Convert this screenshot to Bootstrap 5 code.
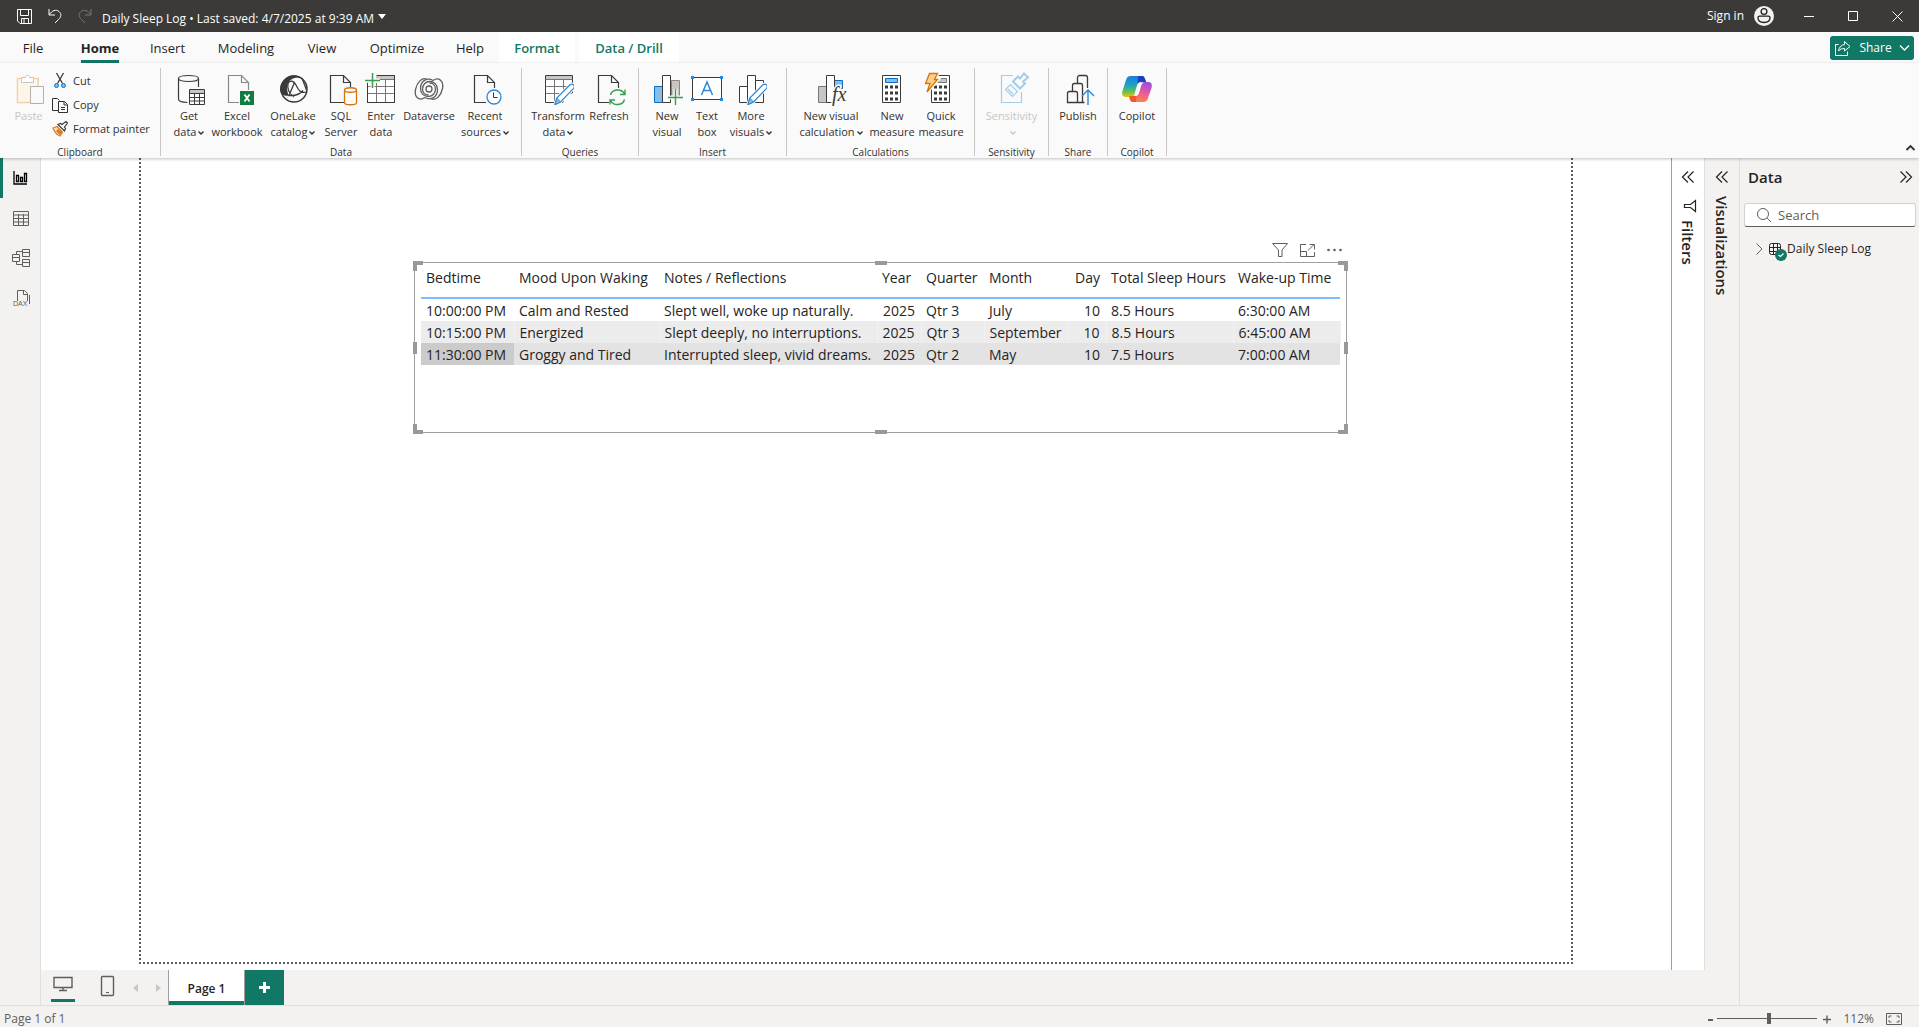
<!DOCTYPE html>
<html lang="en">
<head>
<meta charset="utf-8">
<meta name="viewport" content="width=device-width, initial-scale=1">
<title>Daily Sleep Log</title>
<link href="https://cdn.jsdelivr.net/npm/bootstrap@5.3.0/dist/css/bootstrap.min.css" rel="stylesheet">
<style>
:root{--green:#117865;--ink:#252423;--pane:#f3f2f1;--rule:#e1dfdd}
body{font-family:"Open Sans","Noto Sans",sans-serif;font-size:12px;line-height:16px;color:var(--ink);background:#fff}
button{background:none;border:0;padding:0;color:inherit;font:inherit}
a{color:inherit;text-decoration:none}
svg{display:block;flex:none;overflow:visible;fill:none;stroke:currentColor}
.titlebar{height:32px;background:#3b3a39;color:#fff}
.title-tools{width:102px;padding-left:17px}
.doc-title{font-size:12px;padding-top:5px}
.win-btn{width:44px;height:32px}
.signin{margin-right:13px;gap:10px}
.tabrow{height:31px;background:#fafafa;font-size:13px}
.rtab{height:31px;position:relative}
.rtab.active{font-weight:700}
.rtab.active::after{content:"";position:absolute;left:15px;right:15px;bottom:0;height:3px;background:var(--green)}
.rtab.ctx{background:#fff;color:var(--green);font-weight:600}
.w58{width:58px}.w62{width:62px}.w66{width:66px}.w67{width:67px}.w68{width:68px}.w76{width:76px}.w88{width:88px}.w90{width:90px}.w100{width:100px}
.share-btn{width:84px;height:24px;background:var(--green);color:#fff;border-radius:3px;font-size:12px;gap:8px;margin:4px 5px 0 0}
.ribbon{height:95px;background:#fafafa;box-shadow:0 1px 3px rgba(0,0,0,.25);z-index:2;padding-top:5px;color:#323130}
.rgroup{height:88px;border-right:1px solid #c8c6c4}
.rgroup .items{height:78px;padding:5px 5px 0}
.glabel{font-size:10px;line-height:12px;text-align:center;height:10px}
.rbtn{gap:3px;height:68px}
.rbtn .cap{white-space:nowrap;text-align:center;font-size:11px}
.rbtn:disabled{color:#c8c6c4}
.b34{width:34px}.b38{width:38px}.b42{width:42px}.b44{width:44px}.b46{width:46px}.b50{width:50px}.b54{width:54px}.b62{width:62px}.b64{width:64px}.b78{width:78px}
.clip{width:161px}
.clip .paste{width:47px}
.clip .items{align-items:flex-start}
.clip-list{height:72px;margin-top:-4px}
.clip-line{height:24px;gap:5px;font-size:11px}
.rgroup.g-insert .items{padding-left:9px;padding-right:12px}
.rgroup.g-query .items{padding-left:4px;padding-right:10px}
.rgroup.g-calc .items{padding-right:6px}
.g-one{width:59px}.g-sens{width:74px}
.caret{display:inline-block;width:6px;height:6px;margin-left:2px}
.leftnav{width:41px;background:var(--pane);border-right:1px solid var(--rule);color:#605e5c}
.leftnav button{height:40px;width:40px;padding-left:2px}
.leftnav button.active{border-left:3px solid var(--green);padding:0 2px 0 0;color:#000}
.stage{padding:0 98px 6px}
.report{border:2px dotted #605e5c;border-width:0 2px 2px;position:relative}
.visual{position:absolute;left:273px;top:104px;width:933px;height:171px;border:1px solid #a19f9d;padding:0 6px}
.vtools{position:absolute;right:4px;top:-20px;gap:12px;color:#605e5c}
.grip{position:absolute;border:0 solid #999}
.grip.tl,.grip.tr,.grip.bl,.grip.br{width:10px;height:10px}
.grip.tl{left:-2px;top:-2px;border-left-width:4px;border-top-width:4px}
.grip.tr{right:-2px;top:-2px;border-right-width:4px;border-top-width:4px}
.grip.bl{left:-2px;bottom:-2px;border-left-width:4px;border-bottom-width:4px}
.grip.br{right:-2px;bottom:-2px;border-right-width:4px;border-bottom-width:4px}
.gm{background:#999;width:12px;height:4px;left:50%;margin-left:-6px}
.gs{background:#999;width:4px;height:12px;top:50%;margin-top:-6px}
.g-top{top:-2px}.g-bottom{bottom:-2px}.g-left{left:-2px}.g-right{right:-2px}
.grid-data{width:919px;table-layout:fixed;border-collapse:collapse;font-size:14px;line-height:20px}
.grid-data th{font-weight:400;height:35px;padding:0 5px 4px;border-bottom:2px solid #7cbcff;white-space:nowrap;vertical-align:middle}
.grid-data td{height:22px;padding:2px 5px 0;white-space:nowrap;vertical-align:middle}
.grid-data .num{text-align:right;padding-right:6px}
.grid-data .alt td{background:#ececec;border-right:1px solid #f1f1f1}
.grid-data .sel td{background:#e3e3e3}
.grid-data .sel td:first-child{background:#cbcbcb}
.filters{width:34px;background:#fff;border-left:1px solid #a19f9d;border-right:1px solid var(--rule)}
.viz{width:35px;background:var(--pane);border-right:1px solid var(--rule)}
.vert{writing-mode:vertical-rl;font-size:15px;line-height:20px;font-weight:600}
.side-top{height:38px}
.datapane{width:179px;background:var(--pane);padding:0 3px 0 4px}
.datapane h2{font-size:15px;line-height:20px;font-weight:600;margin:0}
.searchbox{height:24px;background:#fff;border:1px solid #d1d1d1;border-bottom-color:#605e5c;border-radius:3px;gap:7px;padding-left:12px;margin-top:7px}
.searchbox input{border:0;outline:0;background:none;font-size:13px;width:120px;padding:0;color:#605e5c}
.searchbox input::placeholder{color:#605e5c;opacity:1}
.tree{margin-top:14px;padding-left:12px;gap:7px;height:16px;font-size:12px}
.pagebar{height:35px;background:var(--pane)}
.devices{width:127px;padding-left:10px;color:#605e5c}
.dev{height:32px}
.dev.on{border-bottom:3px solid var(--green);padding-bottom:2px}
.dev.arrow{height:35px}
.dev svg{margin:0 auto}
.devices .arrow + .arrow{margin:0 7px 0 18px}
.ptab{width:77px;height:35px;background:#fff;border:solid #a19f9d;border-width:0 1px;font-size:12px;font-weight:600;box-shadow:inset 0 -4px var(--green);padding-top:2px}
.addp{width:39px;height:35px;background:var(--green);color:#fff}
.status{height:22px;background:var(--pane);border-top:1px solid var(--rule);color:#605e5c;padding:4px 17px 0 4px}
.status .pct{margin:0 12px}
.zoomr{-webkit-appearance:none;appearance:none;width:100px;height:12px;background:linear-gradient(#605e5c,#605e5c) center/100% 1px no-repeat;margin:0 6px 0 4px}
.zoomr::-webkit-slider-thumb{-webkit-appearance:none;width:4px;height:11px;background:#605e5c}
</style>
</head>
<body class="d-flex flex-column vh-100 overflow-hidden">
<svg width="0" height="0" class="position-absolute" aria-hidden="true">
<defs>
<symbol id="page" viewBox="0 0 32 32"><path d="M12 29.500H5.500V2.500h13l7 7V15M18.500 2.500v7h7" fill="none" stroke="#3b3a39" stroke-width="1.200"/></symbol>
<symbol id="pencil" viewBox="0 0 32 32"><path d="M13 31.500l1.800-6.500L28 11.800c2.500-2 5.500.7 3.600 3.500L18.500 29z" fill="#fff" stroke="#fafafa" stroke-width="3"/><path d="M13 31.500l1.800-6.500L28 11.800c2.500-2 5.500.7 3.600 3.500L18.500 29z" fill="#fff" stroke="#2b88d8" stroke-width="1.200"/><path d="M13 31.500l1.800-6.500 3.700 4z" fill="#83beec" stroke="#2b88d8"/></symbol>
<symbol id="chev" viewBox="0 0 6 6"><path d="M.5 1.500L3 4l2.500-2.500" fill="none" stroke="currentColor" stroke-width="1.400"/></symbol>
<symbol id="calc" viewBox="0 0 20 28"><path d="M.5.5h18v27H.5z" fill="#fff" stroke="#3b3a39"/><path d="M3 10.500h3v3H3zm5 0h3v3H8zm5 0h3v3h-3zm-10 6h3v3H3zm5 0h3v3H8zm5 0h3v3h-3zm-10 6h3v3H3zm5 0h3v3H8zm5 0h3v3h-3z" fill="#3b3a39" stroke="none"/></symbol>
</defs>
</svg>

<header class="titlebar d-flex align-items-center">
  <div class="title-tools d-flex align-items-center">
    <button aria-label="Save"><svg width="15" height="15" viewBox="0 0 15 15"><path d="M.5.5h14v14H3L.5 12zM3.500.5v6h8v-6M4.500 14.500v-5h7v5M7 10v4"/></svg></button>
    <button aria-label="Undo" class="ms-3"><svg width="14" height="16" viewBox="0 0 14 16"><path d="M1 1v6h6M1.500 6.500C4 2.500 8 1 11 3.500s2 5.500-.5 8L7 15"/></svg></button>
    <button aria-label="Redo" class="ms-3" disabled><svg width="14" height="16" viewBox="0 0 14 16"><path d="M13 1v6H7M12.500 6.500C10 2.500 6 1 3 3.500S1 9 3.500 11.500L7 15" stroke="#797775"/></svg></button>
  </div>
  <button class="doc-title d-flex align-items-center">Daily Sleep Log • Last saved: 4/7/2025 at 9:39 AM<svg class="ms-1 mb-1" width="8" height="5" viewBox="0 0 8 5"><path d="M0 0h8L4 5z" fill="#fff" stroke="none"/></svg></button>
  <div class="ms-auto d-flex align-items-center">
    <button class="signin d-flex align-items-center">Sign in
      <svg width="20" height="20" viewBox="0 0 20 20"><circle cx="10" cy="10" r="10" fill="#f3f2f1" stroke="none"/><g stroke="#201f1e" stroke-width="1.300"><circle cx="10" cy="5.500" r="2.900"/><path d="M5.500 10.200h9c1.200 0 1.500.8 1.500 1.600 0 3-2.500 4.700-6 4.700s-6-1.700-6-4.700c0-.8.3-1.600 1.500-1.600z"/></g></svg></button>
    <button class="win-btn d-flex align-items-center justify-content-center" aria-label="Minimize"><svg width="10" height="10"><path d="M0 5.500h10"/></svg></button>
    <button class="win-btn d-flex align-items-center justify-content-center" aria-label="Maximize"><svg width="10" height="10"><path d="M.5.5h9v9h-9z"/></svg></button>
    <button class="win-btn d-flex align-items-center justify-content-center" aria-label="Close"><svg width="11" height="11"><path d="M.5.5l10 10m0-10l-10 10"/></svg></button>
  </div>
</header>

<nav class="tabrow d-flex">
  <button class="rtab w66">File</button><button class="rtab w68 active">Home</button><button class="rtab w67">Insert</button><button class="rtab w90">Modeling</button><button class="rtab w62">View</button><button class="rtab w88">Optimize</button><button class="rtab w58">Help</button><button class="rtab ctx w76">Format</button><button class="rtab ctx w100 ms-1">Data / Drill</button>
  <button class="share-btn ms-auto d-flex align-items-center justify-content-center"><svg width="16" height="15" viewBox="0 0 16 15"><path d="M3.500 3.500h-3v11h12v-4M9.500.5L15 5.500l-5.500 4.500V7.500C7 7.500 5 8 3.500 10 4 6.500 6 4 9.500 3.500z"/></svg><span>Share</span><svg width="9" height="6"><path d="M0 .5L4.500 5 9 .5" stroke-width="1.300"/></svg></button>
</nav>

<section class="ribbon d-flex position-relative">
  <div class="rgroup clip">
    <div class="items d-flex">
      <button class="rbtn paste d-flex flex-column align-items-center" disabled><svg width="32" height="32" viewBox="0 0 32 32"><path d="M8 5.500H4.500v24h13M20 5.500h5V13" stroke="#f5cfa5" stroke-width="1.500"/><path d="M6.500 7.500h16v6h-5v14h-11z" fill="#fdf5e6" stroke="none"/><path d="M8.500 9.500v-5h4c0-3 4-3 4 0h4v5z" fill="#fff" stroke="#c8c6c4"/><path d="M17.500 13.500h13v17h-13z" fill="#fafafa" stroke="#b3b0ad"/></svg><span class="cap">Paste</span></button>
      <div class="clip-list d-flex flex-column">
        <button class="clip-line d-flex align-items-center"><svg width="16" height="16" viewBox="0 0 16 16"><path d="M4.500 0l6 10.500M11.500 0l-6 10.500" stroke="#3b3a39" stroke-width="1.300"/><circle cx="4.500" cy="12.500" r="2" stroke="#0078d4" fill="#83beec"/><circle cx="11.500" cy="12.500" r="2" stroke="#0078d4" fill="#83beec"/></svg>Cut</button>
        <button class="clip-line d-flex align-items-center"><svg width="16" height="16" viewBox="0 0 16 16" stroke="#3b3a39"><path d="M6 13.500H.5V1.500h5l2 2M6.500 4.500h6l3 3v8h-9zM12 4.500V8h3.500M9 10.500h4M9 12.500h4"/></svg>Copy</button>
        <button class="clip-line d-flex align-items-center"><svg width="16" height="16" viewBox="0 0 16 16"><path d="M1 7l4-1.500L10.500 11 8 15C5.500 14 2.500 11 1 7z" fill="#fce1bd" stroke="#d67f2c" stroke-width="1.300"/><path d="M4 10l4 4 2-3-4-3z" fill="#e8730c" stroke="none"/><path d="M6 3.500l6.500 6.500 1-2.500-1-1.500L15.500 2 14 .5 10 3.500 8.500 2.500z" fill="#fff" stroke="#3b3a39" stroke-width="1.200"/></svg>Format painter</button>
      </div>
    </div>
    <div class="glabel">Clipboard</div>
  </div>

  <div class="rgroup">
    <div class="items d-flex">
      <button class="rbtn b46 d-flex flex-column align-items-center"><svg width="32" height="32" viewBox="0 0 32 32"><path d="M5.500 5.500c0-4 20-4 20 0s-20 4-20 0zV26c0 2 4 3.300 9 3.500M25.500 5.500V14" stroke="#3b3a39" stroke-width="1.200"/><path d="M16.500 16.500h15v15h-15z" fill="#fff" stroke="#3b3a39"/><path d="M17 17h14v3H17z" fill="#c8c6c4" stroke="none"/><path d="M16.500 20.500h15m-15 4h15m-15 3.500h15M21.500 20v11M26.500 20v11" stroke="#3b3a39"/></svg><span class="cap">Get<br>data<svg class="caret"><use href="#chev"/></svg></span></button>
      <button class="rbtn b50 d-flex flex-column align-items-center"><svg width="32" height="32" viewBox="0 0 32 32"><path d="M18 29.500H7.500V2.500h13l7 7V17M20.500 2.500v7h7" stroke="#8a8886" stroke-width="1.200"/><path d="M19 18h14v14H19z" fill="#107c41" stroke="none"/><path d="M23.500 21.500l5 7m0-7l-5 7" stroke="#fff" stroke-width="1.800"/></svg><span class="cap">Excel<br>workbook</span></button>
      <button class="rbtn b62 d-flex flex-column align-items-center"><svg width="32" height="32" viewBox="0 0 32 32"><circle cx="17" cy="16" r="13" stroke="#3b3a39" stroke-width="1.500"/><path d="M9 5.500C12 1.500 20 1 25 5c-5-1-9 0-12 2.500C9.500 11 9 17 12 22.500c-5 1-8.500-1-9-6C3 12 5.500 7.500 9 5.500z" fill="#3b3a39" stroke="none"/><path d="M11 10.500c2-4 6-2.500 8 1.500s4 9 10.500 7M11 10.500c-1 5 1 10 6 13.500M17.500 9.500l-5.500 13c7 .5 11-1 14-5M25 5l4.500 12" stroke="#3b3a39" stroke-width="1.300"/></svg><span class="cap">OneLake<br>catalog<svg class="caret"><use href="#chev"/></svg></span></button>
      <button class="rbtn b34 d-flex flex-column align-items-center"><svg width="32" height="32" viewBox="0 0 32 32"><use href="#page"/><path d="M12 29.500h7" stroke="#3b3a39"/><path d="M19.500 17v12.500c0 3 12 3 12 0V17c0-3-12-3-12 0z" fill="#fff" stroke="#d9730d" stroke-width="1.300"/><path d="M19.500 17c0 3 12 3 12 0" stroke="#d9730d" stroke-width="1.300"/></svg><span class="cap">SQL<br>Server</span></button>
      <button class="rbtn b46 d-flex flex-column align-items-center"><svg width="32" height="32" viewBox="0 0 32 32"><path d="M2.500 9.500v20h27v-27h-18" fill="#fff" stroke="#3b3a39"/><path d="M11 3h18v3.500H11z" fill="#c8c6c4" stroke="none"/><path d="M11 6.500h18.500M11 13.500h18.500M2.500 20.500h27M11.500 10v19M20.500 7v22M2.500 13.500h9" stroke="#797775"/><path d="M2.500 12v17.500h27v-27H12" stroke="#3b3a39"/><path d="M7.500 0v15M0 7.500h15" stroke="#fafafa" stroke-width="4"/><path d="M7.500 0v15M0 7.500h15" stroke="#379e4e" stroke-width="1.500"/></svg><span class="cap">Enter<br>data</span></button>
      <button class="rbtn b50 d-flex flex-column align-items-center"><svg width="32" height="32" viewBox="0 0 32 32"><g stroke="#605e5c" stroke-width="1.300"><path d="M20 7.500C14 4 7.500 8 7.500 15.500c0 5 3.500 8 8 8 4 0 7-3.500 7-7.500 0-3.500-2.500-6-6-6"/><path d="M12 24.500c6 3.500 12.500-.5 12.500-8 0-5-3.500-8-8-8-4 0-7 3.500-7 7.500 0 3.500 2.500 6 6 6"/><path d="M12 24.500C6 28.500 1 24 2.500 16.500 4 9 9 4.500 13.500 6M20 7.500c6-4 11 .5 9.500 8-1.500 7.500-6.500 12-11 10.500"/><circle cx="16" cy="16" r="3"/></g></svg><span class="cap">Dataverse</span></button>
      <button class="rbtn b62 d-flex flex-column align-items-center"><svg width="32" height="32" viewBox="0 0 32 32"><use href="#page"/><path d="M12 29.500h5" stroke="#3b3a39"/><circle cx="25" cy="24" r="7" fill="#fff" stroke="#2b88d8" stroke-width="1.300"/><path d="M24.500 19.500v5h4" stroke="#3b3a39"/></svg><span class="cap">Recent<br>sources<svg class="caret"><use href="#chev"/></svg></span></button>
    </div>
    <div class="glabel">Data</div>
  </div>

  <div class="rgroup g-query">
    <div class="items d-flex">
      <button class="rbtn b64 d-flex flex-column align-items-center"><svg width="32" height="32" viewBox="0 0 32 32"><path d="M3.500 2.500h27v27h-27z" fill="#fff" stroke="#3b3a39"/><path d="M4 3h26v3.500H4z" fill="#c8c6c4" stroke="none"/><path d="M3.500 6.500h27m-27 7h27m-27 7h27M12.500 7v22M21.500 7v22" stroke="#797775"/><path d="M22 30l9-9v9z" fill="#fafafa" stroke="#fafafa" stroke-width="2"/><use href="#pencil"/></svg><span class="cap">Transform<br>data<svg class="caret"><use href="#chev"/></svg></span></button>
      <button class="rbtn b38 d-flex flex-column align-items-center"><svg width="32" height="32" viewBox="0 0 32 32"><use href="#page"/><path d="M12 29.500h4" stroke="#3b3a39"/><path d="M17.500 22c1.500-6 11-7 14-1M31.500 26.500c-1.500 6-11 7-14 1M32 16.500v5h-5M17 31.500V27h5" stroke="#379e4e" stroke-width="1.400"/></svg><span class="cap">Refresh</span></button>
    </div>
    <div class="glabel">Queries</div>
  </div>

  <div class="rgroup g-insert">
    <div class="items d-flex">
      <button class="rbtn b38 d-flex flex-column align-items-center"><svg width="32" height="32" viewBox="0 0 32 32"><path d="M3.500 13.500h8v16h-8z" fill="#83beec" stroke="#0f6cbd"/><path d="M20.500 7.500h8v16h-8z" fill="#c8c6c4" stroke="#8a8886"/><path d="M11.500 2.500h8v27h-8z" fill="#fff" stroke="#3b3a39"/><path d="M24.500 16v16M17 24.500h15" stroke="#fafafa" stroke-width="4"/><path d="M24.500 16v16M17 24.500h15" stroke="#379e4e" stroke-width="1.400"/></svg><span class="cap">New<br>visual</span></button>
      <button class="rbtn b42 d-flex flex-column align-items-center"><svg width="32" height="32" viewBox="0 0 32 32"><path d="M1.500 4.500h29v22h-29z" fill="#fff" stroke="#3b3a39"/><path d="M0 3h3v3H0zm29 0h3v3h-3zM0 25h3v3H0zm29 0h3v3h-3z" fill="#2b88d8" stroke="none"/><path d="M10.500 22L16 9l5.500 13M12.500 17.500h7" stroke="#2b88d8" stroke-width="1.500"/></svg><span class="cap">Text<br>box</span></button>
      <button class="rbtn b46 d-flex flex-column align-items-center"><svg width="32" height="32" viewBox="0 0 32 32"><path d="M4.500 13.500h8v16h-8zM20.500 7.500h8v22h-8zM12.500 2.500h8v27h-8z" fill="#fff" stroke="#3b3a39"/><use href="#pencil"/></svg><span class="cap">More<br>visuals<svg class="caret"><use href="#chev"/></svg></span></button>
    </div>
    <div class="glabel">Insert</div>
  </div>

  <div class="rgroup g-calc">
    <div class="items d-flex">
      <button class="rbtn b78 d-flex flex-column align-items-center"><svg width="32" height="32" viewBox="0 0 32 32"><path d="M3.500 13.500h8v16h-8z" fill="#c8c6c4" stroke="#797775"/><path d="M19.500 7.500h8v8h-8z" fill="#83beec" stroke="#0f6cbd"/><path d="M18 29.500h-6.500v-27h8V15" fill="#fff" stroke="#3b3a39"/><text x="17" y="28" font-family="Liberation Serif" font-style="italic" font-size="20" fill="#3b3a39" stroke="#fafafa" stroke-width="3" paint-order="stroke">fx</text></svg><span class="cap">New visual<br>calculation<svg class="caret"><use href="#chev"/></svg></span></button>
      <button class="rbtn b44 d-flex flex-column align-items-center"><svg width="32" height="32" viewBox="0 0 32 32"><use href="#calc" x="6" y="2" width="20" height="28"/><path d="M9.500 5.500h12v4h-12z" fill="#83beec" stroke="#0f6cbd"/></svg><span class="cap">New<br>measure</span></button>
      <button class="rbtn b54 d-flex flex-column align-items-center"><svg width="32" height="32" viewBox="0 0 32 32"><use href="#calc" x="6" y="2" width="20" height="28"/><path d="M11.500 5.500h10v4h-10z" fill="#c8c6c4" stroke="#797775"/><path d="M4.500.5h8l-3 6h3L2 19l3-8.500H.5z" fill="#ffd08a" stroke="#fafafa" stroke-width="4"/><path d="M4.500.5h8l-3 6h3L2 19l3-8.500H.5z" fill="#ffd08a" stroke="#d9730d" stroke-width="1.300"/></svg><span class="cap">Quick<br>measure</span></button>
    </div>
    <div class="glabel">Calculations</div>
  </div>

  <div class="rgroup g-sens">
    <div class="items d-flex justify-content-center">
      <button class="rbtn d-flex flex-column align-items-center" disabled><svg width="32" height="32" viewBox="0 0 32 32" ><g stroke="#a3cdea" stroke-width="1.200"><path d="M17 2.500H5.500v27h20V19" fill="#fafafa"/><path d="M9.500 16.500l5-5 7 7-5 5zM12 16l5 5"/><path d="M17 8.500l5-5 2 2 4-5 4 4-5 4 2 2-5 5z" fill="#fafafa" stroke-width="2"/></g></svg><span class="cap">Sensitivity<br><svg class="caret"><use href="#chev"/></svg></span></button>
    </div>
    <div class="glabel">Sensitivity</div>
  </div>
  <div class="rgroup g-one">
    <div class="items d-flex justify-content-center">
      <button class="rbtn d-flex flex-column align-items-center"><svg width="32" height="32" viewBox="0 0 32 32"><path d="M15.500 10V4.500c0-1 1-2 2-2h6c1 0 2 1 2 2V15M10.500 18v-5.500c0-1 1-2 2-2h6c1 0 2 1 2 2v17M5.500 20.500c0-1 1-2 2-2h6c1 0 2 1 2 2v9h-10zM15.500 29.500h7" stroke="#3b3a39" stroke-width="1.300"/><path d="M26 32V17m-6 6l6-6 6 6" stroke="#2b88d8" stroke-width="1.400"/></svg><span class="cap">Publish</span></button>
    </div>
    <div class="glabel">Share</div>
  </div>
  <div class="rgroup g-one">
    <div class="items d-flex justify-content-center">
      <button class="rbtn d-flex flex-column align-items-center"><svg width="32" height="32" viewBox="0 0 32 32"><defs><linearGradient id="ca" x1="0" y1="0" x2="0" y2="1"><stop offset="0" stop-color="#1f7be0"/><stop offset=".45" stop-color="#1ba4c4"/><stop offset=".75" stop-color="#6bbf4a"/><stop offset="1" stop-color="#f4c20d"/></linearGradient><linearGradient id="cb" x1="0.600" y1="0" x2="0.300" y2="1"><stop offset="0" stop-color="#9b4fe0"/><stop offset=".5" stop-color="#ec5b95"/><stop offset="1" stop-color="#fb8a3c"/></linearGradient></defs><path d="M10 3h11c2 0 2.500 1.500 3 3l1 3h-5c-3 0-3.500 2-4.500 5l-2 7c-.7 2-1.500 3-4 3H5c-3.500 0-4.500-2.500-3.500-6L5 7c.8-2.500 2-4 5-4z" fill="url(#ca)" stroke="none"/><path d="M17 3h4c2 0 2.500 1.500 3 3l1 3h-5c-2 0-3 1-3.500 2z" fill="#1d3fbd" stroke="none"/><path d="M22 29H12c-2 0-2.800-1.500-3.200-3L8 23h4c3 0 3.500-2 4.500-5l2-6c.7-2 1.500-3 4-3H27c3.500 0 4.500 2.500 3.500 6L27 25c-.8 2.500-2 4-5 4z" fill="url(#cb)" stroke="none"/><path d="M8.500 23H12c2 0 3-1 3.500-2L15 29h-3c-2 0-2.800-1.500-3.200-3z" fill="#ee5a2a" stroke="none"/><path d="M19 9.500h4c-1.500.5-2.200 1.500-2.700 3l-2.300 7.500c-.8 2.500-2 3-5 3 1.500-.5 2-1.500 2.500-3l2-7.500c.4-1.500.8-2.500 1.500-3z" fill="#fff" stroke="none"/></svg><span class="cap">Copilot</span></button>
    </div>
    <div class="glabel">Copilot</div>
  </div>
  <button class="ms-auto align-self-end mb-1 me-1" aria-label="Collapse ribbon"><svg width="9" height="10"><path d="M.5 6L4.500 2l4 4" stroke-width="1.800"/></svg></button>
</section>

<main class="d-flex flex-grow-1 overflow-hidden">
  <nav class="leftnav d-flex flex-column">
    <button class="active d-flex align-items-center justify-content-center" aria-label="Report view"><svg width="15" height="14" viewBox="0 0 15 14"><path d="M1 0v13h13M3.500 4.500h2v6h-2zM7.500 6.500h2v4h-2zM11.500 2.500h2v8h-2z" stroke-width="1.300"/></svg></button>
    <button class="d-flex align-items-center justify-content-center" aria-label="Table view"><svg width="16" height="15" viewBox="0 0 16 15"><path d="M.5.5h15v14H.5zM.5 4h15M.5 7.500h15M.5 11h15M5.500 3v11M10.500 3v11"/></svg></button>
    <button class="d-flex align-items-center justify-content-center" aria-label="Model view"><svg width="18" height="18" viewBox="0 0 18 18"><path d="M.5 5.500h7v7h-7zM.5 8.500h7M10.500.5h7v7h-7zM10.500 3.500h7M10.500 10.500h7v7h-7zM10.500 13.500h7M4.500 5.500v-3h6M4.500 12.500v3h6"/></svg></button>
    <button class="d-flex align-items-center justify-content-center" aria-label="DAX query view"><svg width="17" height="17" viewBox="0 0 17 17"><path d="M4.500 11V.5h7l3 3V11M10.500.5v4h4M16.500 5v9"/><text x="0" y="16" font-size="7" font-family="Liberation Sans" fill="#605e5c" stroke="none">DAX</text></svg></button>
  </nav>

  <div class="d-flex flex-column flex-grow-1">
    <div class="d-flex flex-grow-1">
      <div class="stage d-flex flex-grow-1">
        <div class="report flex-grow-1">
          <div class="visual">
            <div class="vtools d-flex align-items-center">
              <svg width="16" height="14" viewBox="0 0 16 14"><path d="M.5.5h15L10 7v6.500H6.500V7z"/></svg>
              <svg width="15" height="13" viewBox="0 0 15 13"><path d="M6 .5H.5v12h14V8M.5 7.500h6v5M8 6.500l6-6M9.500.5h5v5"/></svg>
              <svg width="15" height="4" viewBox="0 0 15 4"><g fill="#605e5c" stroke="none"><circle cx="1.500" cy="2" r="1.300"/><circle cx="7.500" cy="2" r="1.300"/><circle cx="13.500" cy="2" r="1.300"/></g></svg>
            </div>
            <table class="grid-data">
              <colgroup><col width="93"><col width="145"><col width="218"><col width="44"><col width="63"><col width="84"><col width="38"><col width="127"><col width="107"></colgroup>
              <thead><tr><th>Bedtime</th><th>Mood Upon Waking</th><th>Notes / Reflections</th><th>Year</th><th>Quarter</th><th>Month</th><th class="num">Day</th><th>Total Sleep Hours</th><th>Wake-up Time</th></tr></thead>
              <tbody>
                <tr><td>10:00:00 PM</td><td>Calm and Rested</td><td>Slept well, woke up naturally.</td><td class="num">2025</td><td>Qtr 3</td><td>July</td><td class="num">10</td><td>8.5 Hours</td><td>6:30:00 AM</td></tr>
                <tr class="alt"><td>10:15:00 PM</td><td>Energized</td><td>Slept deeply, no interruptions.</td><td class="num">2025</td><td>Qtr 3</td><td>September</td><td class="num">10</td><td>8.5 Hours</td><td>6:45:00 AM</td></tr>
                <tr class="sel"><td>11:30:00 PM</td><td>Groggy and Tired</td><td>Interrupted sleep, vivid dreams.</td><td class="num">2025</td><td>Qtr 2</td><td>May</td><td class="num">10</td><td>7.5 Hours</td><td>7:00:00 AM</td></tr>
              </tbody>
            </table>
            <i class="grip tl"></i><i class="grip tr"></i><i class="grip bl"></i><i class="grip br"></i>
            <i class="grip gm g-top"></i><i class="grip gm g-bottom"></i><i class="grip gs g-left"></i><i class="grip gs g-right"></i>
          </div>
        </div>
      </div>
      <aside class="filters d-flex flex-column align-items-center">
        <button class="side-top d-flex align-items-center" aria-label="Expand filters"><svg width="12" height="12"><path d="M6 .5L.5 6 6 11.500M11.500.5L6 6l5.500 5.500" stroke-width="1.200"/></svg></button>
        <svg class="ms-1 mt-1" width="12" height="12" viewBox="0 0 12 12"><path d="M11.500.5v11L6.500 7.500H.5v-3h6z" stroke-width="1.200"/></svg>
        <div class="vert mt-2">Filters</div>
      </aside>
    </div>
    <div class="pagebar d-flex">
      <div class="devices d-flex">
        <button class="dev on" aria-label="Desktop layout"><svg width="24" height="16" viewBox="0 0 24 16"><path d="M3 1.500h18v10H3zM12 12v2.500M8 14.500h8" stroke-width="1.400"/></svg></button>
        <button class="dev ms-4" aria-label="Phone layout"><svg width="16" height="22" viewBox="0 0 16 22"><rect x="2.500" y="1.500" width="12" height="19" rx="1" stroke-width="1.400"/><path d="M7 17.500h3"/></svg></button>
        <button class="dev arrow ms-auto" aria-label="Previous page"><svg width="5" height="8"><path d="M5 0v8L0 4z" fill="#c8c6c4" stroke="none"/></svg></button>
        <button class="dev arrow" aria-label="Next page"><svg width="5" height="8"><path d="M0 0v8l5-4z" fill="#c8c6c4" stroke="none"/></svg></button>
      </div>
      <button class="ptab">Page 1</button>
      <button class="addp d-flex align-items-center justify-content-center" aria-label="New page"><svg width="11" height="11"><path d="M5.500 0v11M0 5.500h11" stroke-width="3"/></svg></button>
    </div>
  </div>

  <aside class="viz d-flex flex-column align-items-center">
    <button class="side-top d-flex align-items-center" aria-label="Expand visualizations"><svg width="12" height="12"><path d="M6 .5L.5 6 6 11.500M11.500.5L6 6l5.500 5.500" stroke-width="1.200"/></svg></button>
    <div class="vert">Visualizations</div>
  </aside>
  <aside class="datapane">
    <div class="side-top d-flex align-items-center justify-content-between px-1"><h2>Data</h2><button aria-label="Collapse data pane"><svg width="12" height="12"><path d="M6 .5L11.500 6 6 11.500M.5.5L6 6 .5 11.500" stroke-width="1.200"/></svg></button></div>
    <label class="searchbox d-flex align-items-center"><svg width="14" height="14"><circle cx="6" cy="6" r="5.500" stroke="#605e5c"/><path d="M10 10l4 4" stroke="#605e5c"/></svg><input type="text" placeholder="Search" aria-label="Search"></label>
    <a href="#" class="tree d-flex align-items-center"><svg width="6" height="12"><path d="M.5.5L6 6 .5 11.500" stroke="#605e5c"/></svg><svg width="11" height="12" viewBox="0 0 11 12"><rect x=".5" y=".5" width="11" height="11" rx="2"/><path d="M4.500.5v11M8.500.5v11M.5 4.500h11M.5 8.500h11"/><circle cx="12" cy="12" r="6" fill="#117865" stroke="none"/><path d="M9.500 12l2 1.500 3-3" stroke="#fff" stroke-width="1.200"/></svg><span>Daily Sleep Log</span></a>
  </aside>
</main>

<footer class="status d-flex align-items-center">
  <span>Page 1 of 1</span>
  <div class="ms-auto d-flex align-items-center">
    <button aria-label="Zoom out"><svg width="5" height="10"><path d="M0 6h5" stroke-width="2"/></svg></button>
    <input type="range" class="zoomr" min="0" max="100" value="52" aria-label="Zoom">
    <button aria-label="Zoom in"><svg width="8" height="10"><path d="M0 5.500h8M4 1.500v8" stroke-width="1.400"/></svg></button>
    <span class="pct">112%</span>
    <button aria-label="Fit to page"><svg width="16" height="12" viewBox="0 0 16 12"><path d="M.5.5h15v11H.5zM3 5V3h2.500M10.500 3H13v2M3 7v2h2.500M10.500 9H13V7"/></svg></button>
  </div>
</footer>
<script src="https://cdn.jsdelivr.net/npm/bootstrap@5.3.0/dist/js/bootstrap.bundle.min.js"></script>
</body>
</html>
